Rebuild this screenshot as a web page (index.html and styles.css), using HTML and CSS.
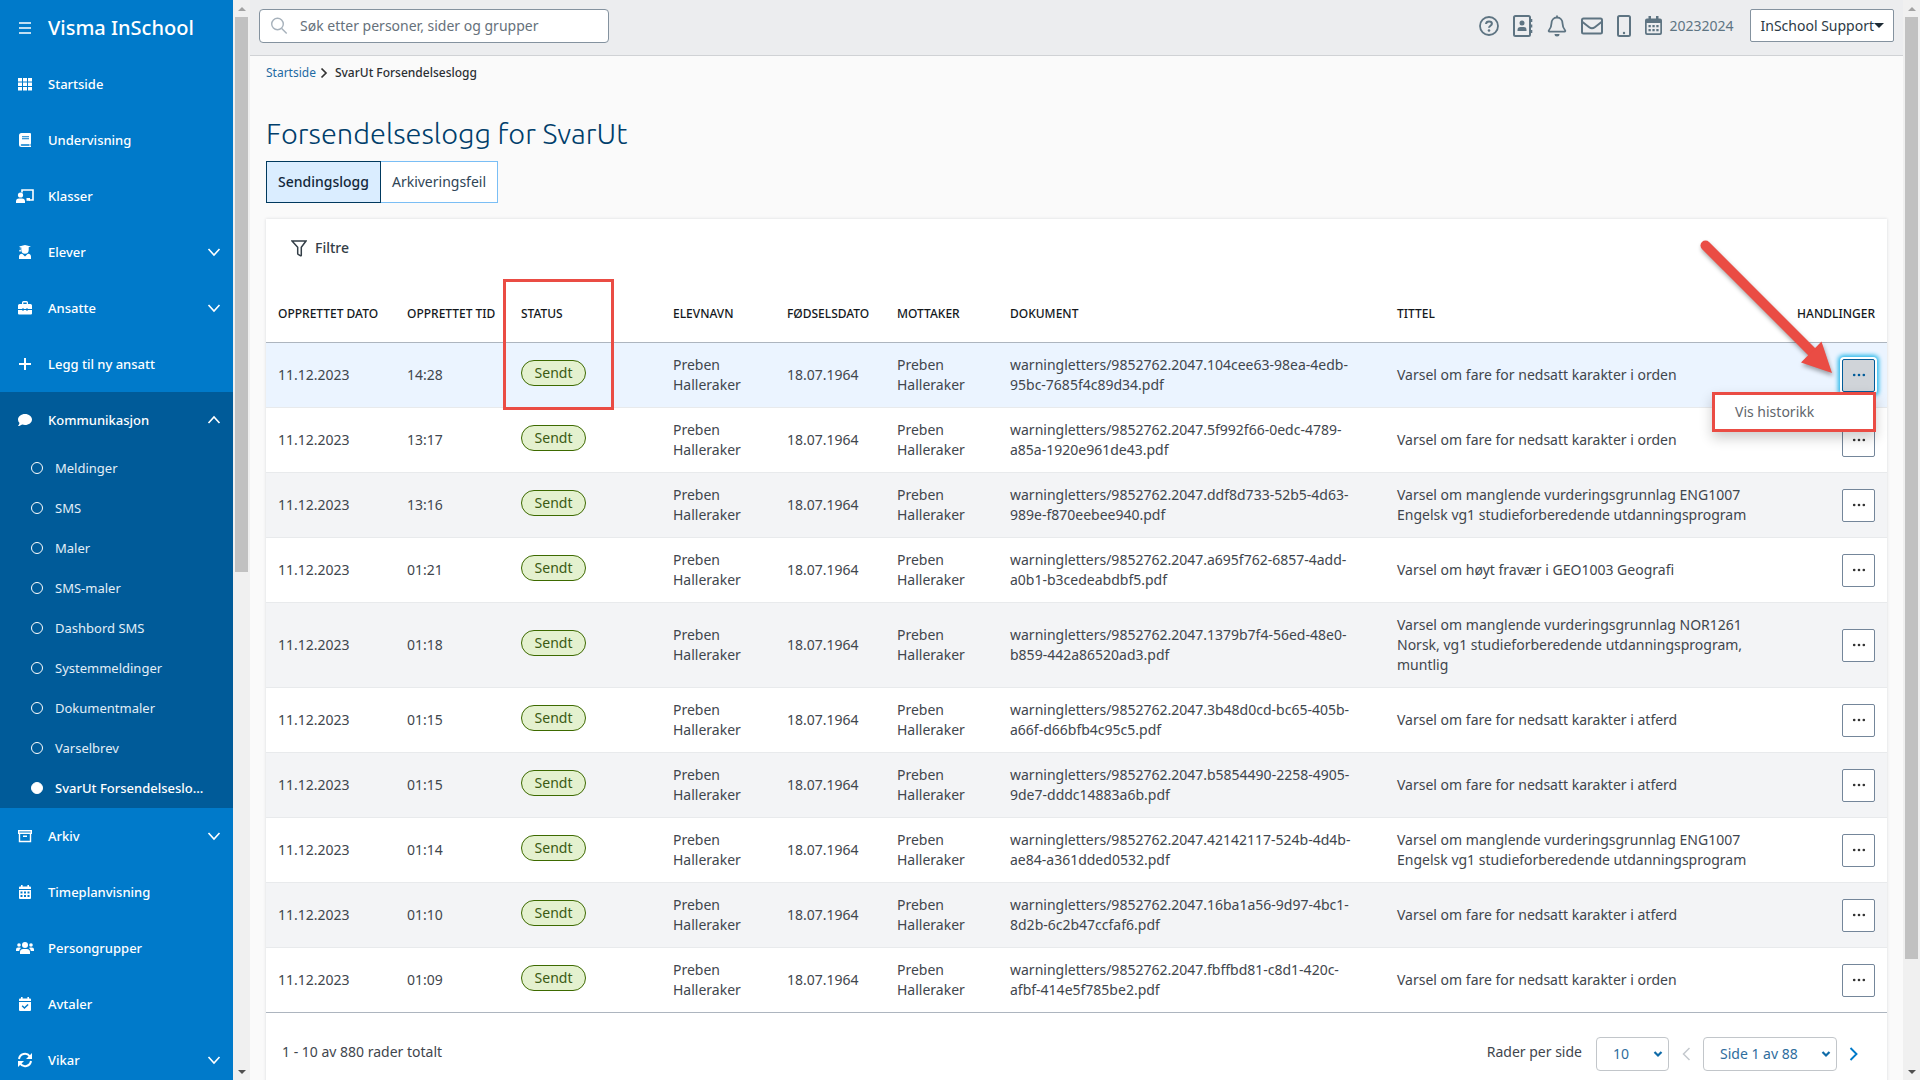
FILE: index.html
```html
<!DOCTYPE html>
<html lang="no">
<head>
<meta charset="utf-8">
<title>SvarUt Forsendelseslogg</title>
<link rel="stylesheet" href="styles.css">
</head>
<body>
<svg width="0" height="0" class="defs" aria-hidden="true">
  <symbol id="down" viewBox="0 0 16 16"><path d="M2.5 5l5.500 6 5.500-6" fill="none" stroke="currentColor" stroke-width="1.600"/></symbol>
  <symbol id="up" viewBox="0 0 16 16"><path d="M2.500 11L8 5l5.500 6" fill="none" stroke="currentColor" stroke-width="1.600"/></symbol>
  <symbol id="dots" viewBox="0 0 16 16"><circle cx="2.500" cy="8" r="1.500"/><circle cx="8" cy="8" r="1.500"/><circle cx="13.500" cy="8" r="1.500"/></symbol>
  <symbol id="caret" viewBox="0 0 10 8"><path d="M1.500 2l3.500 3.500L8.500 2" fill="none" stroke="currentColor" stroke-width="2.200"/></symbol>
</svg>
<div class="app">
  <nav class="sidebar">
    <div class="brand">
      <svg class="icon" viewBox="0 0 16 16"><path d="M2 3h12M2 8h12M2 13h12" stroke="currentColor" stroke-width="1.500"/></svg>
      <span>Visma InSchool</span>
    </div>
    <a class="item" href="#"><svg class="icon" viewBox="0 0 16 16"><path d="M1 2h4v3.500H1zM6 2h4v3.500H6zM11 2h4v3.500h-4zM1 6.500h4V10H1zM6 6.500h4V10H6zM11 6.500h4V10h-4zM1 11h4v3.500H1zM6 11h4v3.500H6zM11 11h4v3.500h-4z"/></svg><span>Startside</span></a>
    <a class="item" href="#"><svg class="icon" viewBox="0 0 16 16"><path fill-rule="evenodd" d="M4.500 1H13a1 1 0 0 1 1 1v9.500l-.5.8v1.400l.5.3v1H4.500A2.500 2.500 0 0 1 2 12.500v-9A2.500 2.500 0 0 1 4.500 1zM5 4.200v1h7v-1zM5 6.300v1h7v-1zM4.500 12.200a.7.700 0 0 0 0 1.500h8v-1.500z"/></svg><span>Undervisning</span></a>
    <a class="item" href="#"><svg class="icon" viewBox="0 0 18 16"><path d="M6 4.500V2h11v10h-4" fill="none" stroke="currentColor" stroke-width="1.600"/><path d="M10.500 10H14v2.800h-3.500z"/><circle cx="4.500" cy="7" r="2.600"/><path d="M0 15v-1.500a3 3 0 0 1 3-3h3a3 3 0 0 1 3 3V15z"/></svg><span>Klasser</span></a>
    <a class="item" href="#"><svg class="icon" viewBox="0 0 16 16"><path d="M2 2.400L8 1l6 1.400-2.300.9V6a3.700 3.700 0 0 1-7.400 0V3.400l-1-.2V6h.6v1.500H2.300V6h.6V3zM2 15v-2.500a3 3 0 0 1 3.200-2.700L8 12.500l2.800-2.700A3 3 0 0 1 14 12.500V15z"/></svg><span>Elever</span><svg class="arrow"><use href="#down"/></svg></a>
    <a class="item" href="#"><svg class="icon" viewBox="0 0 16 16"><path fill-rule="evenodd" d="M5 4V2.500A1.500 1.500 0 0 1 6.500 1h3A1.500 1.500 0 0 1 11 2.500V4h2.500A1.500 1.500 0 0 1 15 5.500V9h-4.500V8h-1v1h-3V8h-1v1H1V5.500A1.500 1.500 0 0 1 2.500 4zM6.300 2.500V4h3.400V2.500zM1 10h4.500v1h1v-1h3v1h1v-1H15v3.500a1 1 0 0 1-1 1H2a1 1 0 0 1-1-1z"/></svg><span>Ansatte</span><svg class="arrow"><use href="#down"/></svg></a>
    <a class="item" href="#"><svg class="icon" viewBox="0 0 16 16"><path d="M2 8h12M8 2v12" stroke="currentColor" stroke-width="2"/></svg><span>Legg til ny ansatt</span></a>
    <div class="group">
      <a class="item" href="#"><svg class="icon" viewBox="0 0 16 16"><path d="M8 2c3.900 0 7 2.500 7 5.500S11.900 13 8 13c-1 0-2-.2-2.900-.5C4 13.300 2.600 14 1 14c.8-.9 1.300-1.900 1.500-2.900A5 5 0 0 1 1 7.500C1 4.500 4.100 2 8 2z"/></svg><span>Kommunikasjon</span><svg class="arrow"><use href="#up"/></svg></a>
      <a class="sub" href="#">Meldinger</a>
      <a class="sub" href="#">SMS</a>
      <a class="sub" href="#">Maler</a>
      <a class="sub" href="#">SMS-maler</a>
      <a class="sub" href="#">Dashbord SMS</a>
      <a class="sub" href="#">Systemmeldinger</a>
      <a class="sub" href="#">Dokumentmaler</a>
      <a class="sub" href="#">Varselbrev</a>
      <a class="sub current" href="#">SvarUt Forsendelseslo...</a>
    </div>
    <a class="item" href="#"><svg class="icon" viewBox="0 0 16 16"><path d="M1.700 2.700h12.600v2.600H1.700zM2.500 5.500v8h11v-8M6 8.200h4" fill="none" stroke="currentColor" stroke-width="1.400"/></svg><span>Arkiv</span><svg class="arrow"><use href="#down"/></svg></a>
    <a class="item" href="#"><svg class="icon" viewBox="0 0 16 16"><path fill-rule="evenodd" d="M4 1h1.600v1.500h4.800V1H12v1.500h1A1 1 0 0 1 14 3.500V5H2V3.500a1 1 0 0 1 1-1h1zM2 6h12v8a1 1 0 0 1-1 1H3a1 1 0 0 1-1-1zM3.500 7.500v2h2v-2zM7 7.500v2h2v-2zM10.500 7.500v2h2v-2zM3.500 11v2h2v-2zM7 11v2h2v-2zM10.500 11v2h2v-2z"/></svg><span>Timeplanvisning</span></a>
    <a class="item" href="#"><svg class="icon" viewBox="0 0 18 16"><circle cx="9" cy="5" r="3"/><circle cx="3" cy="5" r="1.800"/><circle cx="15" cy="5" r="1.800"/><path d="M4 14v-1.500A3.300 3.300 0 0 1 7.300 9h3.400a3.300 3.300 0 0 1 3.300 3.500V14zM0 11V9.500a2 2 0 0 1 2-2h2a2 2 0 0 1 1 .4A4.500 4.500 0 0 0 3.200 11zM18 11V9.500a2 2 0 0 0-2-2h-2a2 2 0 0 0-1 .4A4.500 4.500 0 0 1 14.800 11z"/></svg><span>Persongrupper</span></a>
    <a class="item" href="#"><svg class="icon" viewBox="0 0 16 16"><path fill-rule="evenodd" d="M4 1h1.600v1.500h4.800V1H12v1.500h1A1 1 0 0 1 14 3.500V5H2V3.500a1 1 0 0 1 1-1h1zM2 6h12v8a1 1 0 0 1-1 1H3a1 1 0 0 1-1-1zM4.700 10.200l2.700 2.800 4.200-4.100-1-1-3.200 3.100-1.700-1.800z"/></svg><span>Avtaler</span></a>
    <a class="item" href="#"><svg class="icon" viewBox="0 0 16 16"><path d="M2 7a6 6 0 0 1 10.800-2.700M14 9A6 6 0 0 1 3.200 11.700" fill="none" stroke="currentColor" stroke-width="2"/><path d="M15 1v6H9zM1 15V9h6z"/></svg><span>Vikar</span><svg class="arrow"><use href="#down"/></svg></a>
  </nav>
  <div class="scrollbar" aria-hidden="true"><i class="tri-up"></i><div class="track"><div class="thumb half"></div></div><i class="tri-down"></i></div>

  <div class="main">
    <header class="topbar">
      <label class="search">
        <svg class="line" width="18" height="18" viewBox="0 0 18 18" stroke="#a6b1bb" stroke-width="1.400"><circle cx="7.500" cy="7" r="5.800"/><path d="M11.700 11.500l5 5"/></svg>
        <input type="text" placeholder="Søk etter personer, sider og grupper" aria-label="Søk">
      </label>
      <div class="tools">
        <svg class="line" width="20" height="20" viewBox="0 0 20 20" stroke="currentColor" stroke-width="1.800"><circle cx="10" cy="10" r="9"/><path d="M7 8c.2-1.800 1.500-2.500 3-2.500 1.700 0 2.900 1 2.900 2.300 0 1.900-2.900 2.100-2.900 4" stroke-width="2"/><circle cx="10" cy="14.500" r="1.300" fill="currentColor" stroke="none"/></svg>
        <svg class="line" width="20" height="22" viewBox="0 0 20 22" stroke="currentColor" stroke-width="2"><rect x="1" y="1" width="16" height="20" rx="1.500"/><path d="M18.500 4v3M18.500 9.500v3M18.500 15v3" stroke-width="1.600"/><circle cx="9" cy="8" r="2.500" fill="currentColor" stroke="none"/><path d="M4.500 16v-1a3 3 0 0 1 3-3h3a3 3 0 0 1 3 3v1z" fill="currentColor" stroke="none"/></svg>
        <svg class="line" width="20" height="22" viewBox="0 0 20 22" stroke="currentColor" stroke-width="1.800"><path d="M10 2.500c-3.500 0-5.500 2.700-5.500 5.800 0 4-1.200 5.500-2.700 7.200-.3.400-.1 1.200.6 1.200h15.200c.7 0 .9-.8.6-1.200-1.500-1.700-2.700-3.200-2.700-7.200 0-3.100-2-5.800-5.500-5.800zM10 .5v2"/><path d="M7.500 19h5a2.500 2.500 0 0 1-5 0z" fill="currentColor" stroke="none"/></svg>
        <svg class="line" width="22" height="18" viewBox="0 0 22 18" stroke="currentColor" stroke-width="2"><rect x="1" y="1.500" width="20" height="15" rx="1.500"/><path d="M1.500 5l6.700 5.200c2 1.500 3.600 1.500 5.600 0L20.500 5"/></svg>
        <svg class="line" width="14" height="22" viewBox="0 0 14 22" stroke="currentColor" stroke-width="2"><rect x="1" y="1" width="12" height="20" rx="1.500"/><circle cx="7" cy="18" r="1.200" fill="currentColor" stroke="none"/></svg>
        <span class="year">
          <svg width="17" height="20" viewBox="0 0 17 20"><path fill-rule="evenodd" d="M3.500 0H6v2.500h5V0h2.500v2.500H15a2 2 0 0 1 2 2V17a2 2 0 0 1-2 2H2a2 2 0 0 1-2-2V4.500a2 2 0 0 1 2-2h1.500zM1.700 7v9.500a.8.800 0 0 0 .8.800h12a.8.800 0 0 0 .8-.8V7z"/><path d="M3.500 9h2.300v2.200H3.500zM7.400 9h2.300v2.200H7.400zM11.300 9h2.300v2.200h-2.300zM3.500 13h2.300v2.200H3.500zM7.400 13h2.300v2.200H7.400zM11.300 13h2.300v2.200h-2.300z"/></svg>
          20232024
        </span>
        <button class="user" type="button">InSchool Support<i class="user-caret"></i></button>
      </div>
    </header>

    <div class="content">
      <div class="crumbs"><a href="#">Startside</a><svg width="8" height="12" viewBox="0 0 8 12"><path d="M1.500 1.500L6 6l-4.500 4.500" fill="none" stroke="#333" stroke-width="1.700"/></svg><span>SvarUt Forsendelseslogg</span></div>
      <h1>Forsendelseslogg for SvarUt</h1>
      <div class="tabs"><button class="tab active" type="button">Sendingslogg</button><button class="tab" type="button">Arkiveringsfeil</button></div>

      <section class="card">
        <button class="filter" type="button"><svg width="16" height="17" viewBox="0 0 16 17"><path d="M1 1h14l-4.700 6.300v7.900c0 .6-.5.800-1 .5l-2.100-1.300c-.4-.2-.5-.5-.5-1V7.300z" fill="none" stroke="currentColor" stroke-width="1.500"/></svg>Filtre</button>
        <table>
          <colgroup><col class="c-date"><col class="c-time"><col class="c-status"><col class="c-pupil"><col class="c-born"><col class="c-to"><col class="c-doc"><col><col class="c-act"></colgroup>
          <thead><tr><th>OPPRETTET DATO</th><th>OPPRETTET TID</th><th>STATUS</th><th>ELEVNAVN</th><th>FØDSELSDATO</th><th>MOTTAKER</th><th>DOKUMENT</th><th>TITTEL</th><th class="act">HANDLINGER</th></tr></thead>
          <tbody>
            <tr class="selected"><td>11.12.2023</td><td>14:28</td><td><span class="chip">Sendt</span></td><td>Preben Halleraker</td><td>18.07.1964</td><td>Preben Halleraker</td><td class="doc">warningletters/9852762.2047.104cee63-98ea-4edb-95bc-7685f4c89d34.pdf</td><td>Varsel om fare for nedsatt karakter i orden</td><td class="act"><div class="menu-anchor"><button class="more open" type="button" aria-label="Handlinger"><svg><use href="#dots"/></svg></button><div class="menu"><a href="#">Vis historikk</a></div></div></td></tr>
            <tr><td>11.12.2023</td><td>13:17</td><td><span class="chip">Sendt</span></td><td>Preben Halleraker</td><td>18.07.1964</td><td>Preben Halleraker</td><td class="doc">warningletters/9852762.2047.5f992f66-0edc-4789-a85a-1920e961de43.pdf</td><td>Varsel om fare for nedsatt karakter i orden</td><td class="act"><button class="more" type="button" aria-label="Handlinger"><svg><use href="#dots"/></svg></button></td></tr>
            <tr><td>11.12.2023</td><td>13:16</td><td><span class="chip">Sendt</span></td><td>Preben Halleraker</td><td>18.07.1964</td><td>Preben Halleraker</td><td class="doc">warningletters/9852762.2047.ddf8d733-52b5-4d63-989e-f870eebee940.pdf</td><td>Varsel om manglende vurderingsgrunnlag ENG1007 Engelsk vg1 studieforberedende utdanningsprogram</td><td class="act"><button class="more" type="button" aria-label="Handlinger"><svg><use href="#dots"/></svg></button></td></tr>
            <tr><td>11.12.2023</td><td>01:21</td><td><span class="chip">Sendt</span></td><td>Preben Halleraker</td><td>18.07.1964</td><td>Preben Halleraker</td><td class="doc">warningletters/9852762.2047.a695f762-6857-4add-a0b1-b3cedeabdbf5.pdf</td><td>Varsel om høyt fravær i GEO1003 Geografi</td><td class="act"><button class="more" type="button" aria-label="Handlinger"><svg><use href="#dots"/></svg></button></td></tr>
            <tr><td>11.12.2023</td><td>01:18</td><td><span class="chip">Sendt</span></td><td>Preben Halleraker</td><td>18.07.1964</td><td>Preben Halleraker</td><td class="doc">warningletters/9852762.2047.1379b7f4-56ed-48e0-b859-442a86520ad3.pdf</td><td>Varsel om manglende vurderingsgrunnlag NOR1261 Norsk, vg1 studieforberedende utdanningsprogram, muntlig</td><td class="act"><button class="more" type="button" aria-label="Handlinger"><svg><use href="#dots"/></svg></button></td></tr>
            <tr><td>11.12.2023</td><td>01:15</td><td><span class="chip">Sendt</span></td><td>Preben Halleraker</td><td>18.07.1964</td><td>Preben Halleraker</td><td class="doc">warningletters/9852762.2047.3b48d0cd-bc65-405b-a66f-d66bfb4c95c5.pdf</td><td>Varsel om fare for nedsatt karakter i atferd</td><td class="act"><button class="more" type="button" aria-label="Handlinger"><svg><use href="#dots"/></svg></button></td></tr>
            <tr><td>11.12.2023</td><td>01:15</td><td><span class="chip">Sendt</span></td><td>Preben Halleraker</td><td>18.07.1964</td><td>Preben Halleraker</td><td class="doc">warningletters/9852762.2047.b5854490-2258-4905-9de7-dddc14883a6b.pdf</td><td>Varsel om fare for nedsatt karakter i atferd</td><td class="act"><button class="more" type="button" aria-label="Handlinger"><svg><use href="#dots"/></svg></button></td></tr>
            <tr><td>11.12.2023</td><td>01:14</td><td><span class="chip">Sendt</span></td><td>Preben Halleraker</td><td>18.07.1964</td><td>Preben Halleraker</td><td class="doc">warningletters/9852762.2047.42142117-524b-4d4b-ae84-a361dded0532.pdf</td><td>Varsel om manglende vurderingsgrunnlag ENG1007 Engelsk vg1 studieforberedende utdanningsprogram</td><td class="act"><button class="more" type="button" aria-label="Handlinger"><svg><use href="#dots"/></svg></button></td></tr>
            <tr><td>11.12.2023</td><td>01:10</td><td><span class="chip">Sendt</span></td><td>Preben Halleraker</td><td>18.07.1964</td><td>Preben Halleraker</td><td class="doc">warningletters/9852762.2047.16ba1a56-9d97-4bc1-8d2b-6c2b47ccfaf6.pdf</td><td>Varsel om fare for nedsatt karakter i atferd</td><td class="act"><button class="more" type="button" aria-label="Handlinger"><svg><use href="#dots"/></svg></button></td></tr>
            <tr><td>11.12.2023</td><td>01:09</td><td><span class="chip">Sendt</span></td><td>Preben Halleraker</td><td>18.07.1964</td><td>Preben Halleraker</td><td class="doc">warningletters/9852762.2047.fbffbd81-c8d1-420c-afbf-414e5f785be2.pdf</td><td>Varsel om fare for nedsatt karakter i orden</td><td class="act"><button class="more" type="button" aria-label="Handlinger"><svg><use href="#dots"/></svg></button></td></tr>
          </tbody>
        </table>
        <footer class="pager">
          <span class="total">1 - 10 av 880 rader totalt</span>
          <label for="rows">Rader per side</label>
          <span class="select rows"><select id="rows"><option>10</option></select><svg width="10" height="8"><use href="#caret"/></svg></span>
          <button class="step" type="button" disabled aria-label="Forrige"><svg width="10" height="16" viewBox="0 0 10 16"><path d="M8.500 2L2.500 8l6 6" fill="none" stroke="currentColor" stroke-width="1.500"/></svg></button>
          <span class="select page"><select aria-label="Side"><option>Side 1 av 88</option></select><svg width="10" height="8"><use href="#caret"/></svg></span>
          <button class="step" type="button" aria-label="Neste"><svg width="10" height="16" viewBox="0 0 10 16"><path d="M1.500 2l6 6-6 6" fill="none" stroke="currentColor" stroke-width="1.900"/></svg></button>
        </footer>
        <div class="mark"></div>
        <svg class="pointer" width="140" height="140" viewBox="0 0 140 140"><path d="M5.500 5.500L118 118" stroke="#ea4c44" stroke-width="10" stroke-linecap="round"/><path d="M121.500 101.500L132 133l-31-10.500z" fill="#ea4c44"/></svg>
      </section>
    </div>
  </div>
  <div class="scrollbar" aria-hidden="true"><i class="tri-up"></i><div class="track"><div class="thumb most"></div></div><i class="tri-down"></i></div>
</div>
</body>
</html>
```
FILE: styles.css
```css
* { box-sizing: border-box; }
body { margin: 0; font-family: "Noto Sans", "Open Sans", sans-serif; font-size: 14px; line-height: 20px; color: #3f464d; background: #fafafa; }
button, input, select { font: inherit; color: inherit; margin: 0; }
a { color: inherit; text-decoration: none; }
svg { display: block; flex: none; fill: currentColor; }
svg.line { fill: none; }
.defs { position: absolute; }
.app { display: grid; grid-template-columns: 233px 17px minmax(0, 1fr) 17px; height: 100vh; }

.sidebar { background: #007aca; color: #fff; overflow: auto; scrollbar-width: none; font-size: 13px; font-weight: 500; }
.brand, .item { display: flex; align-items: center; height: 56px; padding: 0 11px 0 16px; gap: 14px; }
.brand { font-size: 20px; }
.icon { width: 18px; height: 16px; }
.arrow { width: 16px; height: 16px; margin-left: auto; }
.group { background: #005b99; }
.sub { display: flex; align-items: center; gap: 12px; height: 40px; padding-left: 31px; color: #e2eef7; font-weight: 400; }
.sub::before { content: ""; width: 10px; height: 10px; border: 1px solid #fff; border-radius: 50%; }
.sub.current { color: #fff; font-weight: 500; }
.sub.current::before { background: #fff; }

.scrollbar { display: flex; flex-direction: column; align-items: center; background: #f0f0f0; padding: 7px 2px 6px; }
.tri-up { border: 4px solid transparent; border-top: 0; border-bottom-color: #a3a3a3; }
.tri-down { border: 4px solid transparent; border-bottom: 0; border-top-color: #505050; }
.track { flex: 1; align-self: stretch; padding: 6px 0; }
.thumb { background: #c1c1c1; }
.half { height: 53%; }
.most { height: 90%; }

.main { overflow: auto; scrollbar-width: none; }
.topbar { display: flex; align-items: center; justify-content: space-between; height: 56px; padding: 0 9px 4px; background: #ecedef; border-bottom: 1px solid #d0d2d5; }
.search { display: flex; align-items: center; gap: 12px; width: 350px; height: 34px; padding: 0 10px; background: #fff; border: 1px solid #84929f; border-radius: 4px; }
.search input { flex: 1; min-width: 0; padding: 0; border: 0; outline: 0; background: none; }
.search input::placeholder { color: #66717b; opacity: 1; }
.tools { display: flex; align-items: center; gap: 14px; color: #5e7482; }
.year { display: flex; align-items: center; gap: 7px; margin-right: 3px; }
.user { display: flex; align-items: center; height: 33px; padding: 0 9px; background: #fff; border: 1px solid #84929f; border-radius: 2px; color: #2c3a45; }
.user-caret { border: 5px solid transparent; border-top-color: #1e2b35; border-bottom: 0; }

.content { padding: 7px 16px 16px; }
.crumbs { display: flex; align-items: center; gap: 4px; font-size: 12px; color: #2b2f33; }
.crumbs a { color: #1f6ba3; }
.crumbs span { margin-left: 3px; font-weight: 500; }
h1 { margin: 30px 0 8px; font-family: Ubuntu, "Noto Sans", sans-serif; font-size: 29px; line-height: 40px; font-weight: 300; color: #003e6b; }
.tabs { display: flex; }
.tab { height: 42px; padding: 0 11px; background: #fff; border: 1px solid #7abef5; border-left: 0; color: #2f4556; }
.tab.active { background: #daedff; border: 1px solid #00395e; color: #12283a; font-weight: 500; }

.card { position: relative; margin-top: 16px; background: #fff; box-shadow: 0 0 3px #d8dadd; }
.filter { display: flex; align-items: center; gap: 8px; padding: 19px 25px 18px; border: 0; background: none; font-weight: 500; color: #333e47; }
table { width: 100%; table-layout: fixed; border-collapse: collapse; }
.c-date { width: 129px; }
.c-time, .c-pupil { width: 114px; }
.c-status { width: 152px; }
.c-born { width: 110px; }
.c-to { width: 113px; }
.c-doc { width: 387px; }
.c-act { width: 103px; }
th { height: 66px; padding: 10px 12px 0; font-size: 12px; font-weight: 500; text-align: left; color: #14181c; white-space: nowrap; border-bottom: 1px solid #adb5bf; }
th:first-child ~ th { padding-right: 0; }
th.act:last-child { padding: 10px 12px 0 0; }
td { padding: 12px; border-bottom: 1px solid #e8eaec; vertical-align: middle; overflow-wrap: break-word; }
td.doc { padding-right: 24px; }
tbody tr:nth-child(odd) { background: #f3f4f6; }
tbody tr:nth-child(2) { background: #fff; }
tbody tr.selected { background: #ebf4ff; }
tbody tr:last-child td { border-bottom-color: #adb5bf; }
.chip { display: block; width: 65px; height: 26px; margin-bottom: 4px; border: 1px solid #3d6a00; border-radius: 13px; background: #e4f1cf; color: #3b5a12; line-height: 23px; text-align: center; }
.act { text-align: right; }
td.act { padding: 1px 12px 0 0; }
.more { display: inline-grid; place-items: center; width: 33px; height: 33px; padding: 0; vertical-align: middle; border: 1px solid #74869a; border-radius: 2px; background: #fff; color: #333; }
.more svg { width: 14px; height: 14px; }
.more.open { background: #d0d4d9; border-color: #005b99; color: #005b99; box-shadow: 0 0 0 2px #fff, 0 0 4px 4px #28b8ea; }
.menu-anchor { position: relative; }
.menu { position: absolute; z-index: 2; right: -1px; top: 33px; width: 164px; padding: 7px 20px; border: 3px solid #ea4c44; background: #fff; text-align: left; color: #5f666c; box-shadow: 0 6px 12px rgba(0, 0, 0, .2); }
.menu a { display: block; }

.pager { display: flex; align-items: center; padding: 24px 24px 24px 16px; }
.total { margin-right: auto; }
.total, .pager label { padding-bottom: 4px; }
.pager label { margin-right: 14px; }
.select { display: grid; align-items: center; }
.select > * { grid-area: 1 / 1; }
.select select { appearance: none; height: 34px; padding: 0 16px; border: 1px solid #c2c6ca; border-radius: 4px; background: #fff; color: #2f6d9d; }
.select svg { justify-self: end; margin-right: 6px; color: #0f6ba8; pointer-events: none; }
.rows { width: 73px; }
.page { width: 134px; }
.step { padding: 0; margin: 0 12px; border: 0; background: none; color: #007aca; }
.step:last-child { margin-right: 4px; }
.step:disabled { color: #c4c9ce; }

/* Highlights laid over the table */
.mark { position: absolute; left: 237px; top: 60px; width: 111px; height: 131px; border: 3px solid #ea4c44; }
.pointer { position: absolute; right: 47px; top: 21px; filter: drop-shadow(1px 3px 2px rgba(0, 0, 0, .35)); pointer-events: none; }
```
